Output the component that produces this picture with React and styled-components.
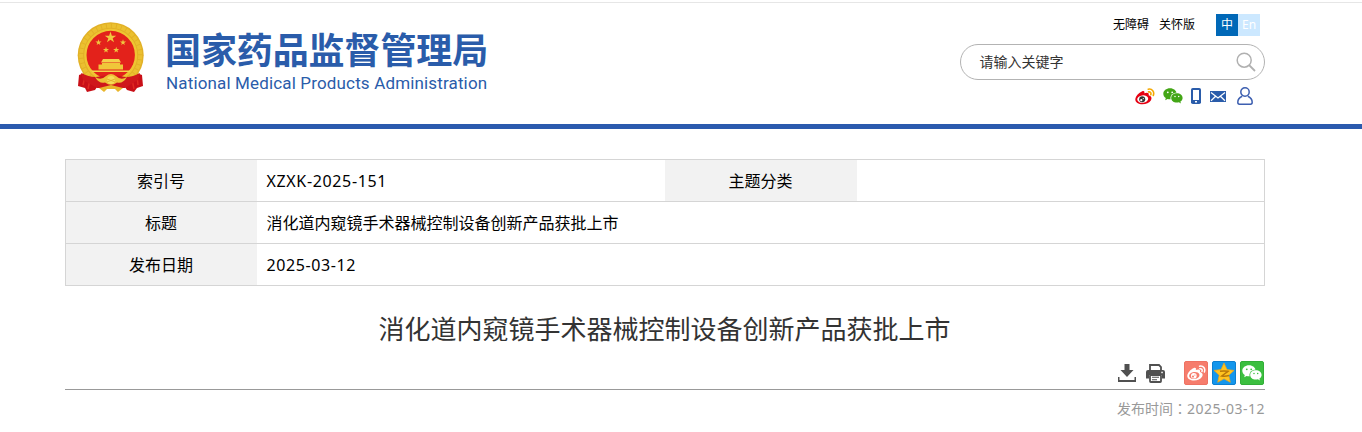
import styled, { createGlobalStyle } from "styled-components";

const GlobalStyle = createGlobalStyle`
  * {
    box-sizing: border-box;
  }
  body {
    margin: 0;
    background: #fff;
    color: #000;
    font-family: "Noto Sans", "Noto Sans CJK SC", sans-serif;
    overflow: hidden;
  }
`;

const Header = styled.header`
  margin-top: 2px;
  height: 127px;
  border-top: 1px solid #e6e6e6;
  border-bottom: 5px solid #2b5aae;
`;

const Container = styled.div`
  width: 1200px;
  margin-left: 65px;
`;

const HeaderInner = styled(Container)`
  display: flex;
  justify-content: space-between;
`;

const Brand = styled.div`
  display: flex;
  padding: 19px 0 0 12px;
`;

const BrandText = styled.div`
  margin-left: 20px;
  padding-top: 5px;
  color: #2a5caa;
`;

const BrandName = styled.div`
  height: 46px;
  line-height: 42px;
  font-family: "Noto Sans CJK SC", sans-serif;
  font-size: 36px;
  font-weight: 700;
  letter-spacing: -0.1px;
  white-space: nowrap;
`;

const BrandSub = styled.div`
  height: 20px;
  padding-left: 1px;
  line-height: 21px;
  font-family: Roboto, "Liberation Sans", sans-serif;
  font-size: 17px;
  letter-spacing: 0.15px;
  white-space: nowrap;
`;

const Tools = styled.div`
  width: 305px;
  padding-top: 11px;
`;

const TopLinks = styled.div`
  display: flex;
  justify-content: flex-end;
  height: 22px;
  padding-right: 5px;
  line-height: 22px;
  font-size: 12px;
`;

const TopLink = styled.a`
  margin-right: 10px;
`;

const LangSwitch = styled.div`
  display: flex;
  margin-left: 11px;
`;

const Lang = styled.a`
  width: 22px;
  height: 22px;
  text-align: center;
  color: #fff;
  background: ${({ $active }) => ($active ? "#0068b7" : "#cce8ff")};
`;

const SearchBox = styled.div`
  display: flex;
  align-items: center;
  justify-content: space-between;
  height: 36px;
  margin-top: 8px;
  padding: 0 8px 0 18.5px;
  border: 1px solid #b3b3b3;
  border-radius: 18px;
  color: #333;
  font-size: 14px;
`;

const Placeholder = styled.span`
  padding-bottom: 2px;
`;

const IconRow = styled.div`
  display: flex;
  align-items: center;
  height: 20px;
  margin-top: 6px;
  padding-left: 174.5px;
`;

const IconSlot = styled.span`
  display: flex;
  flex: none;
  width: ${({ $w }) => $w}px;
`;

const Info = styled(Container)`
  display: grid;
  grid-template-columns: 191px 408px 192px 1fr;
  margin-top: 30px;
  border: 1px solid #d5d5d5;
  font-size: 16px;
  line-height: 41px;
`;

const Label = styled.div`
  height: ${({ $last }) => ($last ? 41 : 42)}px;
  padding: 1px 1px 0 0;
  text-align: center;
  background: #f2f2f2;
  border-bottom: ${({ $last }) => ($last ? "none" : "1px solid #d5d5d5")};
`;

const Value = styled.div`
  height: ${({ $last }) => ($last ? 41 : 42)}px;
  padding: 1px 0 0 9.5px;
  border-bottom: ${({ $last }) => ($last ? "none" : "1px solid #d5d5d5")};
  grid-column: ${({ $wide }) => ($wide ? "span 3" : "auto")};
`;

const Latin = styled.span`
  letter-spacing: ${({ $track }) => $track || 0}px;
`;

const Title = styled.h1`
  height: 40px;
  margin: 23px 1px 0 0;
  line-height: 40px;
  text-align: center;
  font-size: 26px;
  font-weight: 400;
  color: #333;
`;

const ShareBar = styled.div`
  display: flex;
  justify-content: flex-end;
  height: 41px;
  padding: 12px 1px 0 0;
  border-bottom: 1px solid #999;
`;

const Action = styled.span`
  display: flex;
  align-items: center;
  width: 28px;
  height: 24px;
`;

const Share = styled.span`
  display: flex;
  width: 24px;
  height: 24px;
  margin-left: ${({ $first }) => ($first ? 10 : 4)}px;
  border-radius: 2px;
  border: 1px solid ${({ $edge }) => $edge};
  background: ${({ $bg }) => $bg};
  align-items: center;
  justify-content: center;
`;

const PubTime = styled.div`
  height: 38px;
  line-height: 38px;
  text-align: right;
  font-size: 14px;
  color: #999;
`;

const Colon = styled.span`
  line-height: 1;
  font-family: "Noto Sans CJK TC", sans-serif;
`;

const STAR = "M0 -1L.225 -.309L.951 -.309L.363 .118L.588 .809L0 .382L-.588 .809L-.363 .118L-.951 -.309L-.225 -.309Z";

const stars = [
  [33.5, 15.5, 6],
  [21.5, 20.5, 3.2],
  [46, 20.5, 3.2],
  [29, 28, 3.2],
  [39.2, 28, 3.2],
];

const Emblem = () => (
  <svg width="68" height="72" viewBox="0 0 68 72">
    <path d="M10 50L2 53L1 64L8 66L10 70L18 68L22 62L34 66L46 62L50 68L57 70L60 66L66 64L65 53L57 50Z" fill="#c90f17" />
    <path d="M8 54L6 63M13 57L11 67M60 54L61 63M55 57L57 67" stroke="#e02a22" strokeWidth="1.500" />
    <circle cx="33.700" cy="33.300" r="33" fill="#e2b127" />
    <circle cx="33.700" cy="33.300" r="29.500" fill="none" stroke="#ebc030" strokeWidth="4" strokeDasharray="4 1" />
    <circle cx="33.700" cy="33.300" r="25" fill="none" stroke="#efc532" strokeWidth="3" />
    <circle cx="33.700" cy="33" r="24.200" fill="#e3221b" />
    <path d="M4 51Q16 57 24 54L34 53L44 54Q52 57 63 51L61 58L48 66H20L6 58Z" fill="#cf171b" />
    {stars.map(([x, y, r]) => (
      <path key={`${x}-${y}`} d={STAR} transform={`translate(${x} ${y}) scale(${r})`} fill="#f0c840" />
    ))}
    <path d="M26 37H42L44 40.500H24Z" fill="#f4d24a" />
    <path d="M25 41H43V42.500H46V47.500H21.500V42.500H25Z" fill="#f0c63a" />
    <path d="M15 48.500H53V50H15Z" fill="#f4d24a" />
    <path d="M18 55Q24 59 29 54Q34 50 39 54Q44 59 50 55Q46 62 40 60.500Q34 65 28 60.500Q22 62 18 55Z" fill="#eec137" />
    <path d="M22 66Q26 65 34 63Q42 65 46 66L41 70L38 67H30L27 70Z" fill="#e9b62c" />
    <circle cx="34" cy="58" r="4" fill="#f6dc58" />
    <path d="M30 57L38 60M38 57L30 60" stroke="#e0a928" strokeWidth=".8" />
  </svg>
);

const SearchIcon = () => (
  <svg width="20" height="20" viewBox="0 0 20 20" fill="none" stroke="#b0b0b0" strokeWidth="1.5">
    <circle cx="8.200" cy="8.200" r="7" />
    <path d="M13 13L19 19" strokeWidth="1.8" />
  </svg>
);

const Weibo = ({ size = 20, body = "#e60012", wave = "#f5a800", eye = "#fff", pupil = "#333" }) => (
  <svg width={size} height={size * 0.85} viewBox="0 0 20 17">
    <path d="M7.300 3.200C9 2.500 9.900 3.500 9.300 5.300C12 4.300 14.300 4.600 13.700 7.300C16.200 8 17.200 9.900 16 12.200C14.500 15 11 16.300 7.400 16.300C3.500 16.300.3 14.400.3 11.500C.3 8.600 3.700 4.600 7.300 3.200Z" fill={body} />
    <ellipse cx="7.700" cy="11.100" rx="5.500" ry="3.700" fill={eye} transform="rotate(-8 7.700 11.100)" />
    <circle cx="7.200" cy="11.300" r="3" fill={pupil} />
    <circle cx="6.300" cy="12.200" r="1.100" fill={eye} />
    <circle cx="8.300" cy="10.600" r=".6" fill={eye} />
    <path d="M13.200 1.200C17.200.4 19.700 3.800 18.300 7.400M13.500 3.900C15.300 3.600 16.400 5 15.800 6.700" fill="none" stroke={wave} strokeWidth="1.600" strokeLinecap="round" />
  </svg>
);

const Wechat = ({ width = 20, color = "#43a616", dot = "#fff" }) => (
  <svg width={width} height={width * 0.8} viewBox="0 0 20 16">
    <path d="M7 .3C3.300.3.300 2.700.300 5.800C.300 7.600 1.300 9.100 2.800 10.100L2.200 12.200L4.600 11C5.400 11.200 6.200 11.300 7 11.300C10.700 11.300 13.600 8.800 13.600 5.800C13.600 2.700 10.700.3 7 .3Z" fill={color} />
    <ellipse cx="13.800" cy="10" rx="6.400" ry="5.400" fill={dot} />
    <path d="M13.800 5.200C10.700 5.200 8.200 7.300 8.200 9.900C8.200 12.500 10.700 14.600 13.800 14.600C14.500 14.600 15.200 14.500 15.900 14.300L17.900 15.400L17.400 13.600C18.800 12.700 19.600 11.400 19.600 9.900C19.600 7.300 17 5.200 13.800 5.200Z" fill={color} />
    <g fill={dot}>
      <circle cx="4.800" cy="4.300" r=".9" />
      <circle cx="9.200" cy="4.300" r=".9" />
      <circle cx="12" cy="8.500" r=".75" />
      <circle cx="15.700" cy="8.500" r=".75" />
    </g>
  </svg>
);

const Phone = () => (
  <svg width="10" height="16" viewBox="0 0 10 16">
    <rect width="10" height="16" rx="1.800" fill="#2a5caa" />
    <rect x="2" y="2" width="6" height="10" fill="#fff" />
    <rect x="4" y="13" width="2" height="1.500" fill="#fff" />
  </svg>
);

const Mail = () => (
  <svg width="16" height="11" viewBox="0 0 16 11">
    <rect width="16" height="11" fill="#2a5caa" />
    <path d="M1 1.500L8 7L15 1.500M1 9.800L5.600 5.300M15 9.800L10.400 5.300" fill="none" stroke="#fff" strokeWidth="1.200" />
  </svg>
);

const User = () => (
  <svg width="16" height="18" viewBox="0 0 16 18" fill="none" stroke="#3d5fb0" strokeWidth="1.500">
    <circle cx="8" cy="5" r="4.200" />
    <path d="M5.200 9.200C2.500 10.300.8 12.400.8 15.300C.8 16.700 1.300 17.200 2.400 17.200H13.600C14.700 17.200 15.200 16.700 15.200 15.300C15.200 12.400 13.500 10.300 10.800 9.200" />
  </svg>
);

const Download = () => (
  <svg width="18" height="18" viewBox="0 0 18 18" fill="#505050">
    <path d="M6.500 0H11.500V6H15.500L9 13L2.500 6H6.500Z" />
    <path d="M0 13H1.500V16H16.500V13H18V18H0Z" />
  </svg>
);

const Print = () => (
  <svg width="19" height="19" viewBox="0 0 19 19">
    <path d="M4 6V1H13L15 3V6" fill="#fff" stroke="#505050" strokeWidth="1.800" />
    <path d="M2 6H17Q19 6 19 8V14.500H16V11H3V14.500H0V8Q0 6 2 6Z" fill="#505050" />
    <rect x="4" y="11" width="11" height="7" rx=".8" fill="#fff" stroke="#505050" strokeWidth="1.800" />
    <path d="M6 13.300H13M6 15.700H11" stroke="#505050" strokeWidth="1.100" />
    <rect x="15.300" y="7.700" width="1.500" height="1.500" fill="#fff" />
  </svg>
);

const Qzone = () => (
  <svg width="22" height="22" viewBox="0 0 22 22">
    <path d="M11 1L14 7.600L21 8.400L15.800 13.200L17.300 20.300L11 16.800L4.700 20.300L6.200 13.200L1 8.400L8 7.600Z" fill="#ffc420" stroke="#f3a414" strokeWidth=".7" strokeLinejoin="round" />
    <path d="M7 9.300Q11 8.500 15 9.300L8.700 14Q12 14.700 16 13.500" fill="none" stroke="#b87808" strokeWidth="1.500" />
  </svg>
);

const App = () => {
  return <>
    <GlobalStyle />
    <Header>
      <HeaderInner>
        <Brand>
          <Emblem />
          <BrandText>
            <BrandName>国家药品监督管理局</BrandName>
            <BrandSub>National Medical Products Administration</BrandSub>
          </BrandText>
        </Brand>
        <Tools>
          <TopLinks>
            <TopLink>无障碍</TopLink>
            <TopLink>关怀版</TopLink>
            <LangSwitch>
              <Lang $active>中</Lang>
              <Lang>En</Lang>
            </LangSwitch>
          </TopLinks>
          <SearchBox>
            <Placeholder>请输入关键字</Placeholder>
            <SearchIcon />
          </SearchBox>
          <IconRow>
            <IconSlot $w={28}><Weibo /></IconSlot>
            <IconSlot $w={28.5}><Wechat /></IconSlot>
            <IconSlot $w={19}><Phone /></IconSlot>
            <IconSlot $w={27}><Mail /></IconSlot>
            <IconSlot $w={16}><User /></IconSlot>
          </IconRow>
        </Tools>
      </HeaderInner>
    </Header>
    <Info>
      <Label>索引号</Label>
      <Value><Latin $track={0.65}>XZXK-2025-151</Latin></Value>
      <Label>主题分类</Label>
      <Value />
      <Label>标题</Label>
      <Value $wide>消化道内窥镜手术器械控制设备创新产品获批上市</Value>
      <Label $last>发布日期</Label>
      <Value $wide $last><Latin $track={0.6}>2025-03-12</Latin></Value>
    </Info>
    <Container>
      <Title>消化道内窥镜手术器械控制设备创新产品获批上市</Title>
      <ShareBar>
        <Action><Download /></Action>
        <Action><Print /></Action>
        <Share $first $bg="#f67c6c" $edge="#ee7263">
          <Weibo size={19} body="#fff" wave="#fff" eye="#f67c6c" pupil="#fff" />
        </Share>
        <Share $bg="#1496ec" $edge="#0d7fd0"><Qzone /></Share>
        <Share $bg="#3bbf3f" $edge="#32ae37"><Wechat width={20} color="#fff" dot="#3bbf3f" /></Share>
      </ShareBar>
      <PubTime>发布时间<Colon>：</Colon><Latin $track={0.5}>2025-03-12</Latin></PubTime>
    </Container>
  </>
}

export default App;
